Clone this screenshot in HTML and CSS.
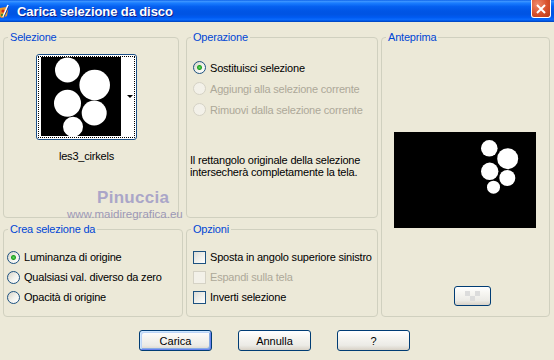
FILE: index.html
```html
<!DOCTYPE html>
<html lang="it">
<head>
    <meta charset="UTF-8">
    <title>Carica selezione da disco</title>
    <link rel="stylesheet" href="styles.css">
</head>
<body>
<div class="window">
    <div class="titlebar">
        <svg class="app-icon" width="9" height="15" viewBox="0 0 9 15">
            <path d="M0 4 L6 3 L8 6 L7 12 L2 14 L0 13 Z" fill="#e8962c"/>
            <circle cx="3" cy="7" r="1.6" fill="#d12a1c"/>
            <circle cx="5" cy="10" r="1.3" fill="#f6d23a"/>
            <circle cx="2" cy="11" r="1.2" fill="#3a8a2a"/>
            <path d="M3 13 L8 1" stroke="#ffffff" stroke-width="1.6"/>
            <path d="M4 13 L9 2" stroke="#1b3fa8" stroke-width="1"/>
        </svg>
        <span class="title">Carica selezione da disco</span>
        <span class="close-btn">
            <svg width="10" height="10" viewBox="0 0 10 10">
                <path d="M1 1 L9 9 M9 1 L1 9" stroke="#fff" stroke-width="2"/>
            </svg>
        </span>
    </div>

    <div class="dialog">
        <div class="groups">
            <fieldset class="group group-selezione">
                <legend>Selezione</legend>
                <div class="thumb-combo">
                    <div class="thumb-focus">
                        <svg class="thumb-img" width="80" height="79" viewBox="0 0 80 79">
                            <rect width="80" height="79" fill="#000"/>
                            <circle cx="26.5" cy="13" r="12.5" fill="#fff"/>
                            <circle cx="53.7" cy="28" r="15.3" fill="#fff"/>
                            <circle cx="26.5" cy="46.3" r="13.5" fill="#fff"/>
                            <circle cx="53.2" cy="56" r="12.5" fill="#fff"/>
                            <circle cx="32" cy="69.8" r="10" fill="#fff"/>
                        </svg>
                        <div class="thumb-drop"><span class="drop-arrow"></span></div>
                    </div>
                </div>
                <div class="thumb-name">les3_cirkels</div>
            </fieldset>

            <fieldset class="group group-operazione">
                <legend>Operazione</legend>
                <div class="opt-list">
                    <label class="opt"><input type="radio" name="op" checked>Sostituisci selezione</label>
                    <label class="opt disabled"><input type="radio" name="op" disabled>Aggiungi alla selezione corrente</label>
                    <label class="opt disabled"><input type="radio" name="op" disabled>Rimuovi dalla selezione corrente</label>
                </div>
                <p class="note">Il rettangolo originale della selezione<br>intersecherà completamente la tela.</p>
            </fieldset>

            <fieldset class="group group-anteprima">
                <legend>Anteprima</legend>
                <svg class="preview" width="142" height="96" viewBox="0 0 142 96">
                    <rect width="142" height="96" fill="#000"/>
                    <circle cx="95.3" cy="16.3" r="8.3" fill="#fff"/>
                    <circle cx="113.7" cy="26.7" r="10.5" fill="#fff"/>
                    <circle cx="95.7" cy="39.3" r="8.7" fill="#fff"/>
                    <circle cx="113.3" cy="46" r="8" fill="#fff"/>
                    <circle cx="99.5" cy="55.2" r="6.5" fill="#fff"/>
                </svg>
                <button class="btn btn-small" type="button">
                    <svg width="16" height="10" viewBox="0 0 16 10">
                        <rect x="0" y="0" width="5" height="5" fill="#dcdcdc"/>
                        <rect x="10" y="0" width="5" height="5" fill="#dcdcdc"/>
                        <rect x="5" y="5" width="5" height="5" fill="#dcdcdc"/>
                    </svg>
                </button>
            </fieldset>

            <fieldset class="group group-crea">
                <legend>Crea selezione da</legend>
                <div class="opt-list">
                    <label class="opt"><input type="radio" name="src" checked>Luminanza di origine</label>
                    <label class="opt"><input type="radio" name="src">Qualsiasi val. diverso da zero</label>
                    <label class="opt"><input type="radio" name="src">Opacità di origine</label>
                </div>
            </fieldset>

            <fieldset class="group group-opzioni">
                <legend>Opzioni</legend>
                <div class="opt-list">
                    <label class="opt"><input type="checkbox">Sposta in angolo superiore sinistro</label>
                    <label class="opt disabled"><input type="checkbox" disabled>Espandi sulla tela</label>
                    <label class="opt"><input type="checkbox">Inverti selezione</label>
                </div>
            </fieldset>
        </div>

        <div class="buttons">
            <button class="btn btn-default" type="button">Carica</button>
            <button class="btn" type="button">Annulla</button>
            <button class="btn" type="button">?</button>
        </div>
    </div>

    <div class="wm-name">Pinuccia</div>
    <div class="wm-site">www.maidiregrafica.eu</div>
</div>
</body>
</html>
```

FILE: styles.css
```css
body {
    margin: 0;
    background: #ece9d8;
    font-family: "Liberation Sans", Arial, sans-serif;
    font-size: 11px;
    letter-spacing: -0.2px;
    color: #000;
}
.window {
    position: relative;
    width: 554px;
    height: 360px;
    overflow: hidden;
}

/* title bar */
.titlebar {
    height: 22px;
    display: flex;
    align-items: center;
    background: linear-gradient(#0a5fe8 0%, #3d95ff 6%, #1a7dff 14%, #0560f0 30%, #0055e5 50%, #0054e3 65%, #005bf2 80%, #0a6afc 88%, #0059e8 94%, #003fb5 100%);
}
.app-icon {
    flex: none;
}
.title {
    margin-left: 8px;
    color: #fff;
    font-weight: bold;
    font-size: 13px;
    letter-spacing: -0.1px;
    text-shadow: 1px 1px 0 #0f1e8a;
}
.close-btn {
    align-self: flex-start;
    margin-left: auto;
    margin-right: 3px;
    width: 20px;
    height: 18px;
    box-sizing: border-box;
    border: 1px solid #fff;
    border-top: none;
    border-radius: 0 0 3px 3px;
    background: radial-gradient(circle at 30% 25%, #f08a6c, #d8502c 55%, #b73a17);
    display: flex;
    align-items: center;
    justify-content: center;
}

/* dialog body */
.dialog {
    padding: 8px 4px 0 3px;
}
.groups {
    display: grid;
    grid-template-columns: 180px 192px 169px;
    grid-template-rows: 188px 95px;
    column-gap: 3px;
    row-gap: 4px;
}
.group {
    margin: 0;
    padding: 0;
    min-width: 0;
    border: 1px solid #d0d0bf;
    border-radius: 4px;
    box-sizing: border-box;
}
.group legend {
    margin-left: 4px;
    padding: 0 2px;
    line-height: 14px;
    color: #0046d5;
}
.group-selezione { grid-column: 1; grid-row: 1; margin-right: 4px; }
.group-operazione { grid-column: 2; grid-row: 1; }
.group-anteprima { grid-column: 3; grid-row: 1 / span 2; }
.group-crea { grid-column: 1; grid-row: 2; }
.group-opzioni { grid-column: 2; grid-row: 2; }

/* selection thumbnail */
.thumb-combo {
    margin: 10px 0 0 32px;
    width: 101px;
    height: 86px;
    box-sizing: border-box;
    border: 1px solid #1c4f86;
    border-radius: 3px;
    padding: 1px;
    background: #fff;
}
.thumb-focus {
    height: 100%;
    box-sizing: border-box;
    border: 1px dotted #000;
    padding: 0 1px 0 2px;
    display: flex;
}
.thumb-img {
    display: block;
    flex: none;
}
.thumb-drop {
    flex: 1;
    height: 79px;
    background: #fff;
    display: flex;
    align-items: center;
    justify-content: flex-end;
}
.drop-arrow {
    width: 0;
    height: 0;
    border-left: 3px solid transparent;
    border-right: 3px solid transparent;
    border-top: 3px solid #000;
}
.thumb-name {
    margin: 9px 0 0 32px;
    width: 101px;
    text-align: center;
    line-height: 14px;
}

/* radio / checkbox lists */
.opt-list {
    padding: 13px 0 0 6px;
}
.group-crea .opt-list { padding: 11px 0 0 3px; }
.group-opzioni .opt-list { padding: 11px 0 0 6px; }
.opt {
    display: flex;
    align-items: center;
    height: 21px;
}
.group-crea .opt,
.group-opzioni .opt { height: 20px; }
.opt.disabled { color: #aca899; }

.opt input {
    appearance: none;
    -webkit-appearance: none;
    margin: 0 4px 0 0;
    width: 13px;
    height: 13px;
    flex: none;
    box-sizing: border-box;
    border: 1px solid #1c5180;
}
.opt input[type="radio"] {
    border-radius: 50%;
    background: linear-gradient(135deg, #d6d3c8 0%, #f4f3ee 55%, #ffffff 100%);
}
.opt input[type="radio"]:checked {
    background: radial-gradient(circle, #64d864 0, #21a121 2px, rgba(33, 161, 33, 0) 3px),
                linear-gradient(135deg, #d6d3c8 0%, #f4f3ee 55%, #ffffff 100%);
}
.opt input[type="checkbox"] {
    background: linear-gradient(135deg, #dcdcd7 0%, #f2f2ee 60%, #ffffff 100%);
}
.opt input:disabled {
    border-color: #d5d2c5;
    background: #f3f1e9;
}

.note {
    margin: 34px 0 0 3px;
    line-height: 12px;
}

/* preview */
.preview {
    display: block;
    margin: 88px 0 0 12px;
}
.btn {
    width: 73px;
    height: 21px;
    padding: 0;
    box-sizing: border-box;
    border: 1px solid #003c74;
    border-radius: 3px;
    background: linear-gradient(#ffffff 0%, #f6f5f1 35%, #ecebe6 75%, #d8d2c7 100%);
    font: inherit;
    color: #000;
}
.btn-default {
    box-shadow: inset 1px 1px 0 #cee7ff, inset -1px -1px 0 #6982ee, inset 2px 2px 0 #bcd4f6, inset -2px -2px 0 #89ade4;
}
.btn-small {
    display: flex;
    align-items: center;
    justify-content: center;
    width: 37px;
    height: 20px;
    margin: 58px 0 0 72px;
}

/* bottom buttons */
.buttons {
    display: flex;
    gap: 26px;
    margin-top: 13px;
    padding-left: 136px;
}

/* watermark over the dialog */
.wm-name {
    position: absolute;
    left: 97px;
    top: 188px;
    font-size: 17px;
    font-weight: bold;
    letter-spacing: 0.3px;
    line-height: 20px;
    color: #aaa6c8;
}
.wm-site {
    position: absolute;
    left: 67px;
    top: 208px;
    font-size: 11.5px;
    letter-spacing: 0;
    line-height: 13px;
    color: #9c98b6;
}
```
